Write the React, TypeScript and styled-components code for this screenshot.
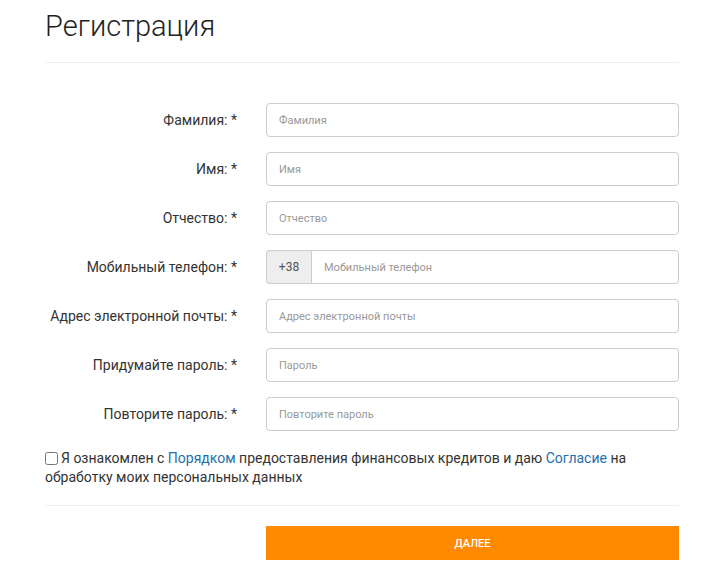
import styled, { createGlobalStyle } from 'styled-components';

const GlobalStyle = createGlobalStyle`
   body {
      margin: 0;
      background: #fff;
      font-family: Roboto, 'Liberation Sans', Arial, sans-serif;
      color: #333;
   }
   * {
      box-sizing: border-box;
   }
`;

interface Field {
   label: string;
   placeholder: string;
   prefix?: string;
}

const fields: Field[] = [
   { label: 'Фамилия:', placeholder: 'Фамилия' },
   { label: 'Имя:', placeholder: 'Имя' },
   { label: 'Отчество:', placeholder: 'Отчество' },
   { label: 'Мобильный телефон:', placeholder: 'Мобильный телефон', prefix: '+38' },
   { label: 'Адрес электронной почты:', placeholder: 'Адрес электронной почты' },
   { label: 'Придумайте пароль:', placeholder: 'Пароль' },
   { label: 'Повторите пароль:', placeholder: 'Повторите пароль' },
];

const App = () => {
   return (
      <>
         <GlobalStyle />
         <Page>
            <Title>Регистрация</Title>
            <Form onSubmit={(e) => e.preventDefault()}>
               {fields.map((f) => (
                  <Row key={f.label}>
                     <Label>{f.label} *</Label>
                     <InputGroup>
                        {f.prefix && <Addon>{f.prefix}</Addon>}
                        <Input placeholder={f.placeholder} $joined={!!f.prefix} />
                     </InputGroup>
                  </Row>
               ))}
               <Agreement>
                  <Check type='checkbox' />
                  Я ознакомлен с <Link href='#'>Порядком</Link> предоставления
                  финансовых кредитов и даю <Link href='#'>Согласие</Link> на
                  обработку моих персональных данных
               </Agreement>
               <Footer>
                  <Submit type='submit'>Далее</Submit>
               </Footer>
            </Form>
         </Page>
      </>
   );
};

export default App;

const Page = styled.div`
   width: 634px;
   margin-left: 45px;
`;

const Title = styled.h1`
   margin: 0;
   padding: 8px 0 18px;
   font-size: 29px;
   font-weight: 300;
   line-height: 36px;
   color: #222;
   border-bottom: 1px solid #eee;
`;

const Form = styled.form`
   display: flex;
   flex-direction: column;
   padding-top: 40px;
`;

const Row = styled.div`
   display: grid;
   grid-template-columns: 192px 1fr;
   column-gap: 29px;
   align-items: center;
   margin-bottom: 15px;
`;

const Label = styled.label`
   text-align: right;
   font-size: 14px;
   color: #333;
`;

const InputGroup = styled.div`
   display: flex;
   height: 34px;
`;

const Addon = styled.span`
   display: flex;
   align-items: center;
   justify-content: center;
   width: 45px;
   flex-shrink: 0;
   font-size: 12px;
   color: #555;
   background: #eee;
   border: 1px solid #ccc;
   border-right: none;
   border-radius: 4px 0 0 4px;
`;

const Input = styled.input<{ $joined: boolean }>`
   flex: 1;
   min-width: 0;
   height: 100%;
   padding: 0 12px;
   font-family: inherit;
   font-size: 11px;
   color: #555;
   border: 1px solid #ccc;
   border-radius: ${(p) => (p.$joined ? '0 4px 4px 0' : '4px')};
   outline: none;

   &::placeholder {
      color: #999;
   }
`;

const Agreement = styled.label`
   display: block;
   margin-top: 3px;
   padding-bottom: 18px;
   font-size: 14px;
   line-height: 19px;
   color: #333;
   border-bottom: 1px solid #eee;
`;

const Check = styled.input`
   width: 13px;
   height: 13px;
   margin: 0 3px 0 0;
   vertical-align: -2px;
`;

const Link = styled.a`
   color: #1f6faa;
   text-decoration: none;
`;

const Footer = styled.div`
   display: flex;
   justify-content: flex-end;
   padding-top: 20px;
`;

const Submit = styled.button`
   width: 413px;
   height: 34px;
   border: none;
   background: #ff8a00;
   color: #fff;
   font-family: inherit;
   font-size: 11px;
   font-weight: 500;
   text-transform: uppercase;
   cursor: pointer;
`;
